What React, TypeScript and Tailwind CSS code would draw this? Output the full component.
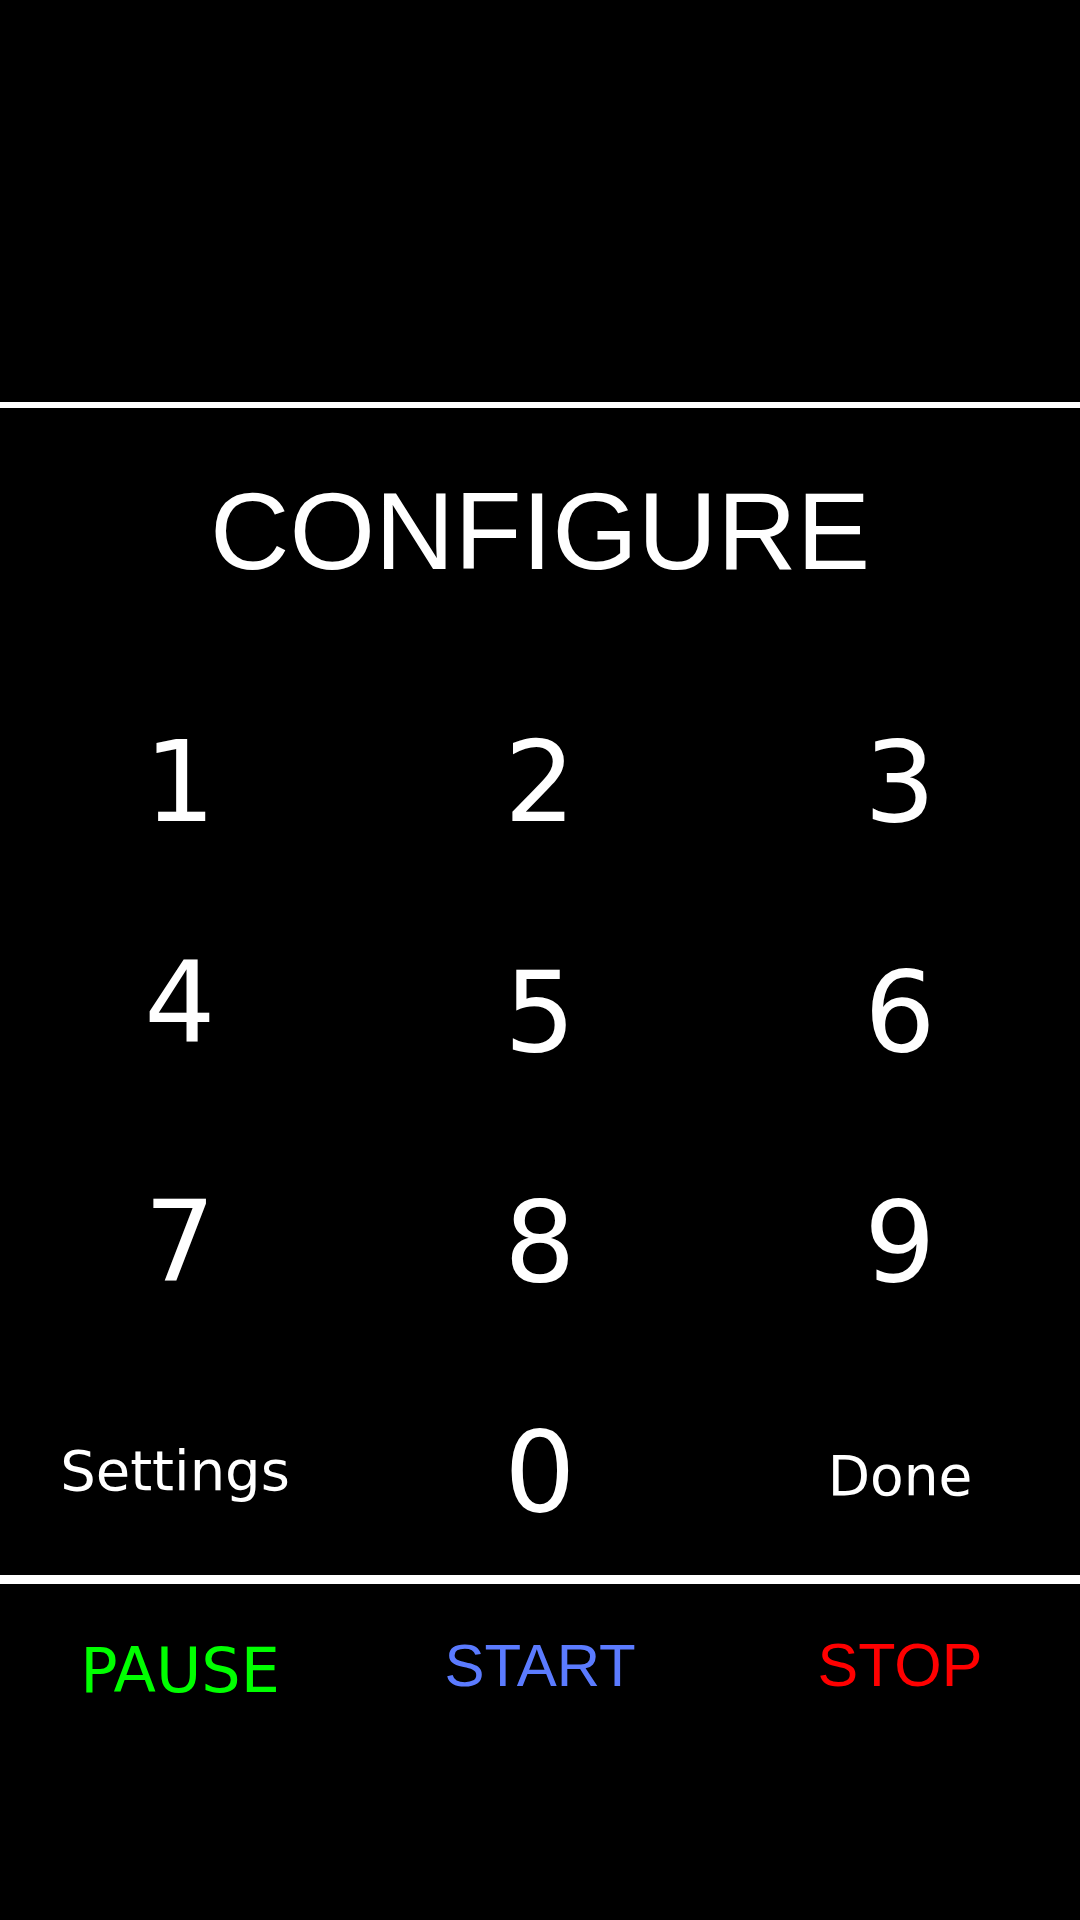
const keys = [
  { label: "1", cls: "" },
  { label: "2", cls: "" },
  { label: "3", cls: "" },
  { label: "4", cls: "-mt-[10px]" },
  { label: "5", cls: "" },
  { label: "6", cls: "" },
  { label: "7", cls: "" },
  { label: "8", cls: "" },
  { label: "9", cls: "" },
];

const dejavu = "font-['DejaVu_Sans',sans-serif]";
const arial = "font-['Liberation_Sans',Arial,sans-serif]";

function Key({ label, cls }: { label: string; cls: string }) {
  return (
    <button className="flex h-[230px] flex-col items-center">
      <span className={`${dejavu} ${cls} text-[112px] leading-none text-white`}>
        {label}
      </span>
    </button>
  );
}

export default function App() {
  return (
    <div className="flex h-[1920px] w-[1080px] flex-col bg-black">
      {/* empty display area */}
      <div className="h-[402px]" />
      <div className="h-[6px] bg-white" />

      <h1
        className={`${arial} mt-[68px] text-center text-[110px] leading-none text-white`}
      >
        CONFIGURE
      </h1>

      <div className="mt-[140px] grid grid-cols-3">
        {keys.map((k) => (
          <Key key={k.label} label={k.label} cls={k.cls} />
        ))}

        <button className="flex h-[159px] flex-col items-center">
          <span
            className={`${dejavu} mt-[27px] pr-[10px] text-[56px] leading-none text-white`}
          >
            Settings
          </span>
        </button>
        <button className="flex h-[159px] flex-col items-center">
          <span className={`${dejavu} text-[112px] leading-none text-white`}>
            0
          </span>
        </button>
        <button className="flex h-[159px] flex-col items-center">
          <span
            className={`${dejavu} mt-[33px] text-[55px] leading-none text-white`}
          >
            Done
          </span>
        </button>
      </div>

      <div className="h-[9px] bg-white" />

      <div className="grid grid-cols-3">
        <button className="flex flex-col items-center">
          <span
            className={`${dejavu} mt-[56px] text-[62px] leading-none text-[#00ff00]`}
          >
            PAUSE
          </span>
        </button>
        <button className="flex flex-col items-center">
          <span
            className={`${arial} mt-[52px] text-[60px] leading-none text-[#5b7bff]`}
          >
            START
          </span>
        </button>
        <button className="flex flex-col items-center">
          <span
            className={`${arial} mt-[51px] text-[61px] leading-none text-[#ff0000]`}
          >
            STOP
          </span>
        </button>
      </div>
    </div>
  );
}
